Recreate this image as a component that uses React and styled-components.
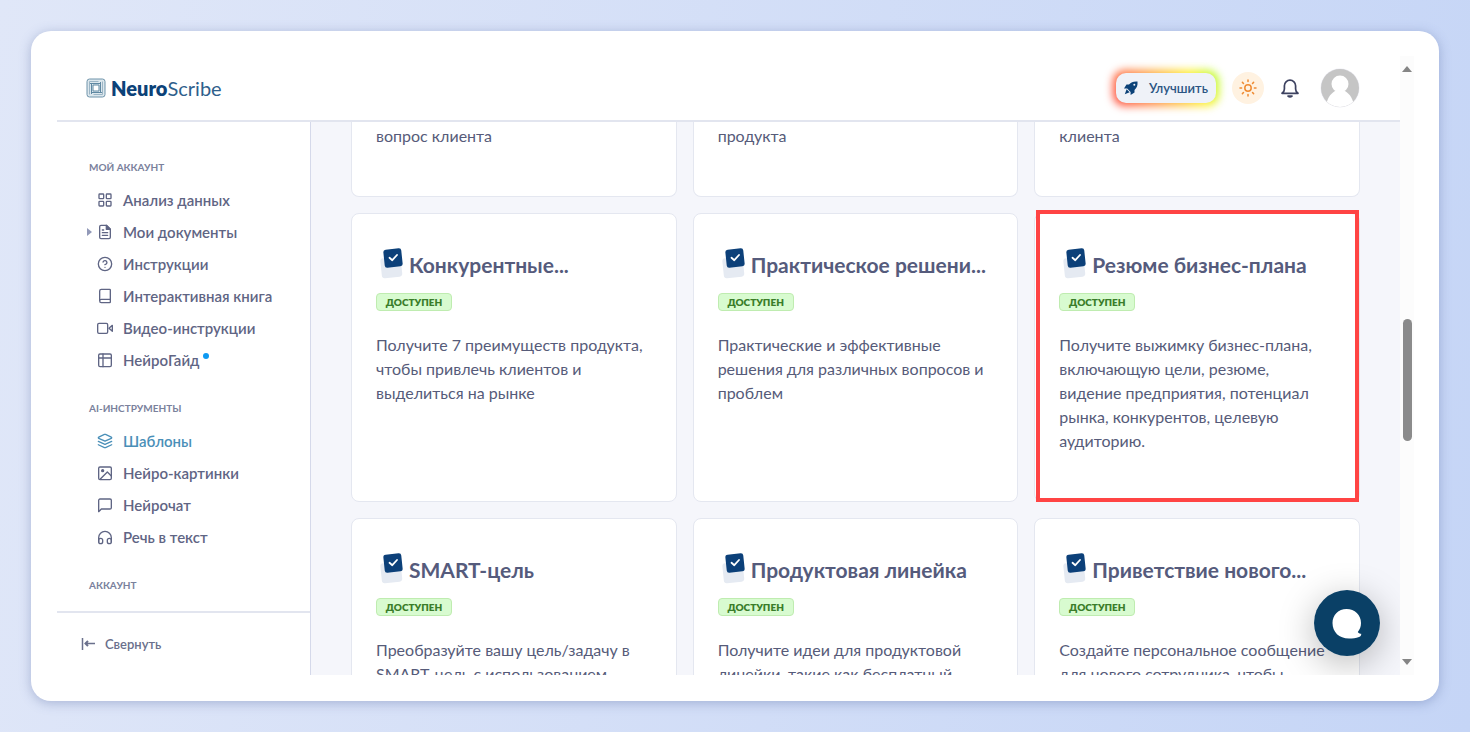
import React from "react";
import styled, { createGlobalStyle, css } from "styled-components";
import {
  LuLayoutGrid,
  LuCircleHelp,
  LuBook,
  LuLayers,
} from "react-icons/lu";

const GlobalStyle = createGlobalStyle`
  *, *::before, *::after {
    box-sizing: border-box;
  }
  body {
    margin: 0;
    font-family: Lato, "Open Sans", sans-serif;
    font-size: 16px;
    color: #52587a;
  }
  h2, h3, p, ul {
    margin: 0;
    padding: 0;
  }
  button {
    font-family: inherit;
    border: 0;
    padding: 0;
    background: none;
    cursor: pointer;
  }
`;

const Page = styled.div`
  min-height: 100vh;
  padding: 31px;
  display: flex;
  background: linear-gradient(100deg, #e0e7f8 0%, #c5d5f6 100%);
`;

const Window = styled.div`
  position: relative;
  flex: 1;
  height: calc(100vh - 62px);
  min-width: 0;
  display: flex;
  padding: 25px 25px 26px 26px;
  border-radius: 20px;
  background: #ffffff;
  box-shadow: 0 2px 12px rgba(70, 90, 150, 0.35);
`;

const Shell = styled.div`
  flex: 1;
  min-width: 0;
  display: flex;
  flex-direction: column;
`;

const Header = styled.header`
  height: 66px;
  flex-shrink: 0;
  display: flex;
  align-items: center;
  justify-content: space-between;
  padding: 0 40px 0 29px;
  border-bottom: 2px solid #e2e5ef;
`;

const Logo = styled.a`
  display: flex;
  align-items: center;
  gap: 5px;
  font-size: 20px;
  line-height: 24px;
  color: #2f5f8c;
  text-decoration: none;
`;

const LogoBold = styled.strong`
  font-weight: 800;
  color: #0c4278;
`;

const HeaderActions = styled.div`
  display: flex;
  align-items: center;
`;

const UpgradeButton = styled.button`
  position: relative;
  height: 30px;
  padding: 0 8px;
  margin-right: 16px;
  display: flex;
  align-items: center;
  gap: 11px;
  border-radius: 10px;
  font-size: 13px;
  font-weight: 600;
  color: #2b5583;
  background: #eff2f8;
  isolation: isolate;

  &::before {
    content: "";
    position: absolute;
    inset: -3px;
    z-index: -2;
    border-radius: 12px;
    background: linear-gradient(60deg, #ff4a38 5%, #ff8f42 35%, #fff02a 75%, #a8ff2c 100%);
    filter: blur(4px);
  }

  &::after {
    content: "";
    position: absolute;
    inset: 0;
    z-index: -1;
    border-radius: 10px;
    background: #eff2f8;
  }
`;

const ThemeButton = styled.button`
  width: 32px;
  height: 32px;
  margin-right: 16px;
  display: flex;
  align-items: center;
  justify-content: center;
  border-radius: 50%;
  background: #fff2e1;
`;

const BellButton = styled.button`
  width: 20px;
  height: 20px;
  margin-right: 20px;
  display: flex;
`;

const AvatarButton = styled.button`
  width: 40px;
  height: 40px;
  display: flex;
`;

const Body = styled.div`
  flex: 1;
  min-height: 0;
  display: flex;
`;

const Sidebar = styled.aside`
  width: 254px;
  flex-shrink: 0;
  display: flex;
  flex-direction: column;
  border-right: 1px solid #d5d9ea;
`;

const Nav = styled.nav`
  flex: 1;
  min-height: 0;
  overflow: hidden;
  padding: 38px 0 0 32px;
`;

const NavHeading = styled.h2`
  font-size: 10px;
  line-height: 14px;
  font-weight: 700;
  text-transform: uppercase;
  color: #7a819c;
`;

const NavList = styled.ul`
  list-style: none;
  padding: 10px 0 25px;
`;

const NavLink = styled.a`
  position: relative;
  height: 32px;
  display: flex;
  align-items: center;
  gap: 10px;
  padding-left: 8px;
  font-size: 15px;
  font-weight: 600;
  color: ${(p) => (p.$active ? "#4a8fb8" : "#5f6584")};
  text-decoration: none;
  white-space: nowrap;

  svg {
    width: 16px;
    height: 16px;
    flex-shrink: 0;
  }
`;

const Caret = styled.span`
  position: absolute;
  left: -2px;
  border-left: 5px solid #9299b8;
  border-top: 4px solid transparent;
  border-bottom: 4px solid transparent;
`;

const NewDot = styled.span`
  width: 6px;
  height: 6px;
  margin: -8px 0 0 -6px;
  border-radius: 50%;
  background: #0d99f2;
`;

const Collapse = styled.button`
  height: 64px;
  flex-shrink: 0;
  display: flex;
  align-items: center;
  gap: 8px;
  padding: 0 24px;
  border-top: 2px solid #e2e5ef;
  font-size: 13px;
  font-weight: 600;
  color: #6a708c;
`;

const Main = styled.main`
  flex: 1;
  min-width: 0;
  overflow: hidden;
  padding: 0 40px;
  background: #f5f6fb;
`;

const Grid = styled.div`
  display: grid;
  grid-template-columns: repeat(3, minmax(0, 1fr));
  gap: 16px;
`;

const Card = styled.article`
  position: relative;
  height: 289px;
  padding: 33px 24px 24px;
  border: 1px solid #e4e7f0;
  border-radius: 8px;
  background: #ffffff;

  ${(p) =>
    p.$cut &&
    css`
      height: 75px;
      padding: 2px 24px;
      border-top: 0;
      border-radius: 0 0 8px 8px;
    `}
`;

const Highlight = styled.span`
  position: absolute;
  inset: -4px 0 -1px 1px;
  border: 4px solid #ff4444;
  pointer-events: none;
`;

const CardTitle = styled.h3`
  display: flex;
  align-items: center;
  gap: 5px;
  padding-left: 4px;
  height: 32px;
  font-size: 21px;
  font-weight: 700;
  color: #555b7c;
  white-space: nowrap;
`;

const TitleText = styled.span`
  padding-top: 2px;
`;

const Badge = styled.span`
  display: block;
  width: 76px;
  margin: 14px 0 22px;
  border: 1px solid #bfecb0;
  border-radius: 4px;
  font-size: 10px;
  line-height: 16px;
  font-weight: 800;
  text-align: center;
  color: #3a7d2a;
  background: #d8fbd0;
`;

const CardText = styled.p`
  font-size: 16px;
  line-height: 24px;
  white-space: pre-line;
  color: #565b79;
`;

const Scrollbar = styled.div`
  width: 14px;
  display: flex;
  flex-direction: column;
  align-items: center;
  padding: 10px 0;
  background: #fcfcfc;
`;

const Arrow = styled.span`
  border-left: 5px solid transparent;
  border-right: 5px solid transparent;
  ${(p) => (p.$down ? "border-top" : "border-bottom")}: 6px solid #858585;
`;

const Track = styled.div`
  flex: 1;
  width: 9px;
  display: grid;
  grid-template-rows: 85fr 42fr 75fr;
`;

const Thumb = styled.div`
  grid-row: 2;
  border-radius: 5px;
  background: #8b8b8b;
`;

const ChatButton = styled.button`
  position: absolute;
  right: 59px;
  bottom: 45px;
  width: 66px;
  height: 66px;
  display: flex;
  border-radius: 50%;
  background: #0a4066;
`;

/* keeps the button's shadow inside the content area */
const ChatShadow = styled.div`
  position: absolute;
  right: 39px;
  bottom: 26px;
  width: 160px;
  height: 160px;
  overflow: hidden;
  pointer-events: none;

  &::before {
    content: "";
    position: absolute;
    right: 20px;
    bottom: 19px;
    width: 66px;
    height: 66px;
    border-radius: 50%;
    box-shadow: 0 8px 36px rgba(0, 0, 0, 0.28);
  }
`;

const Line = (props) => (
  <svg
    width="16"
    height="16"
    viewBox="0 0 24 24"
    fill="none"
    stroke="currentColor"
    strokeWidth="2"
    strokeLinecap="round"
    strokeLinejoin="round"
    aria-hidden="true"
    {...props}
  />
);

const LogoIcon = () => (
  <svg width="20" height="20" viewBox="0 0 20 20" fill="none" aria-hidden="true">
    <rect x="1" y="1" width="18" height="18" rx="2.5" fill="#dce7ed" stroke="#6f94ab" />
    <path d="M3.500 16.500v-13h9M16.500 3.500v13h-9" stroke="#9db6c6" />
    <path d="M4 5.500h10.500M14.500 4v10.500M16 14.500H5.500M5.500 16V5.500" stroke="#5f88a2" />
    <path d="M7 7h6v6H7z" fill="#ffffff" stroke="#5f88a2" />
  </svg>
);

const FileIcon = () => (
  <Line>
    <path d="M14 2H6a2 2 0 0 0-2 2v16a2 2 0 0 0 2 2h12a2 2 0 0 0 2-2V8z" />
    <path d="M14 2v6h6z" fill="currentColor" />
    <path d="M8 9h2M8 13h8M8 17h8" />
  </Line>
);

const VideoIcon = () => (
  <Line>
    <rect x="1" y="5" width="15" height="15" rx="2" />
    <path d="M23 8v9l-5-4.5z" />
  </Line>
);

const TableIcon = () => (
  <Line>
    <rect x="2.5" y="3" width="19" height="19" rx="2" />
    <path d="M2.5 9h19M9 3v19" />
  </Line>
);

const ImageIcon = () => (
  <Line>
    <rect x="2.5" y="3" width="19" height="19" rx="2" />
    <circle cx="8.5" cy="8.5" r="1.5" fill="currentColor" />
    <path d="m5 21 10.5-10.5 6 6" />
  </Line>
);

const MessageIcon = () => (
  <Line>
    <path d="M2.5 22V5a2 2 0 0 1 2-2h15a2 2 0 0 1 2 2v11a2 2 0 0 1-2 2H6.5z" />
  </Line>
);

const HeadphonesIcon = () => (
  <Line>
    <path d="M2.5 19v-6a9.5 9.5 0 0 1 19 0v6" />
    <path d="M2.5 19a3 3 0 0 0 6 0v-2a3 3 0 0 0-6 0zM21.5 19a3 3 0 0 1-6 0v-2a3 3 0 0 1 6 0z" />
  </Line>
);

const CollapseIcon = () => (
  <svg width="16" height="14" viewBox="0 0 16 14" fill="none" stroke="currentColor" strokeWidth="1.5" aria-hidden="true">
    <path d="M1.5 1v12M4.5 6.5H14" />
    <path d="M7 4 4.5 6.5 7 9" strokeWidth="2" />
  </svg>
);

const RocketIcon = () => (
  <svg width="14" height="14" viewBox="0 0 14 14" fill="#0c4278" aria-hidden="true">
    <path d="M13.5.5C9.5.2 7 1.2 5 3.5H2.5L0 7.5h3.2L6.6 11v2.9l3.900-2.400V9C12.800 6.800 13.900 4.400 13.500.5z" />
    <path d="M2.6 8.3.8 13.200l4.800-2z" />
    <circle cx="10.3" cy="3.8" r="1" fill="#eff2f8" />
  </svg>
);

const SunIcon = () => (
  <svg width="18" height="18" viewBox="0 0 18 18" fill="none" stroke="#ef8b32" strokeWidth="1.5" strokeLinecap="round" aria-hidden="true">
    <circle cx="9" cy="9" r="3.2" />
    <path d="M9 1v1.6M9 15.4V17M1 9h1.6M15.4 9H17M3.4 3.4l1.1 1.1M13.5 13.5l1.1 1.1M3.4 14.6l1.1-1.1M13.5 4.5l1.1-1.1" />
  </svg>
);

const BellIcon = () => (
  <svg width="20" height="20" viewBox="0 0 20 20" fill="none" stroke="#3d4260" strokeWidth="1.7" strokeLinejoin="round" aria-hidden="true">
    <path d="M2 15.3h16c-2-1.3-2.4-2.5-2.4-4.3V7.8a5.6 5.6 0 0 0-11.2 0V11c0 1.8-.4 3-2.4 4.3z" />
    <path d="M8 18q2 1.8 4 0z" fill="#3d4260" />
  </svg>
);

const AvatarIcon = () => (
  <svg width="40" height="40" viewBox="0 0 40 40" aria-hidden="true">
    <clipPath id="avatar">
      <circle cx="20" cy="20" r="19" />
    </clipPath>
    <circle cx="20" cy="20" r="19.5" fill="#ececf4" />
    <g clipPath="url(#avatar)">
      <path d="M0 0h40v40H0z" fill="#c5c5c5" />
      <circle cx="20" cy="16" r="8.5" fill="#fff" />
      <path d="M6 40c0-8 4-14 9-17h10c5 3 9 9 9 17z" fill="#fff" />
    </g>
  </svg>
);

const TemplateIcon = () => (
  <svg width="24" height="32" viewBox="0 0 24 32" aria-hidden="true">
    <rect x="1" y="10.5" width="20.5" height="20" rx="3" transform="rotate(-6 11 20)" fill="#e5eaf2" />
    <rect x="4" y="2" width="18" height="18" rx="2.5" transform="rotate(-6 13 11)" fill="#0c4079" />
    <path d="m9.5 10.8 2.8 2.4 4.7-5.2" fill="none" stroke="#fff" strokeWidth="1.8" strokeLinecap="round" strokeLinejoin="round" />
  </svg>
);

const ChatIcon = () => (
  <svg width="66" height="66" viewBox="0 0 66 66" aria-hidden="true">
    <path fill="#fff" d="M32.5 19c8.3 0 14.5 6 14.5 14 0 3.7-1.2 6.7-3.2 8.9.7 1.1 1.8 1.7 3.4 1.9.2 1.6-.5 2.8-2.2 3.2-3 1.1-6.5 1.500-10 1.500C25 48.500 18.500 42 18.500 33c0-8 6-14 14-14z" />
  </svg>
);

const navSections = [
  {
    title: "Мой аккаунт",
    items: [
      { label: "Анализ данных", icon: <LuLayoutGrid /> },
      { label: "Мои документы", icon: <FileIcon />, expandable: true },
      { label: "Инструкции", icon: <LuCircleHelp /> },
      { label: "Интерактивная книга", icon: <LuBook /> },
      { label: "Видео-инструкции", icon: <VideoIcon /> },
      { label: "НейроГайд", icon: <TableIcon />, isNew: true },
    ],
  },
  {
    title: "AI-инструменты",
    items: [
      { label: "Шаблоны", icon: <LuLayers />, active: true },
      { label: "Нейро-картинки", icon: <ImageIcon /> },
      { label: "Нейрочат", icon: <MessageIcon /> },
      { label: "Речь в текст", icon: <HeadphonesIcon /> },
    ],
  },
  { title: "Аккаунт", items: [] },
];

const cutCards = ["вопрос клиента", "продукта", "клиента"];

const cards = [
  {
    title: "Конкурентные...",
    text: "Получите 7 преимуществ продукта,\nчтобы привлечь клиентов и\nвыделиться на рынке",
  },
  {
    title: "Практическое решени...",
    text: "Практические и эффективные\nрешения для различных вопросов и\nпроблем",
  },
  {
    title: "Резюме бизнес-плана",
    text: "Получите выжимку бизнес-плана,\nвключающую цели, резюме,\nвидение предприятия, потенциал\nрынка, конкурентов, целевую\nаудиторию.",
    highlighted: true,
  },
  {
    title: "SMART-цель",
    text: "Преобразуйте вашу цель/задачу в\nSMART-цель с использованием",
  },
  {
    title: "Продуктовая линейка",
    text: "Получите идеи для продуктовой\nлинейки, такие как бесплатный",
  },
  {
    title: "Приветствие нового...",
    text: "Создайте персональное сообщение\nдля нового сотрудника, чтобы",
  },
];

export default function App() {
  return (
    <Page>
      <GlobalStyle />
      <Window>
        <Shell>
          <Header>
            <Logo href="#">
              <LogoIcon />
              <span>
                <LogoBold>Neuro</LogoBold>Scribe
              </span>
            </Logo>
            <HeaderActions>
              <UpgradeButton>
                <RocketIcon />
                Улучшить
              </UpgradeButton>
              <ThemeButton>
                <SunIcon />
              </ThemeButton>
              <BellButton>
                <BellIcon />
              </BellButton>
              <AvatarButton>
                <AvatarIcon />
              </AvatarButton>
            </HeaderActions>
          </Header>
          <Body>
            <Sidebar>
              <Nav>
                {navSections.map((section) => (
                  <React.Fragment key={section.title}>
                    <NavHeading>{section.title}</NavHeading>
                    <NavList>
                      {section.items.map((item) => (
                        <li key={item.label}>
                          <NavLink href="#" $active={item.active}>
                            {item.expandable && <Caret />}
                            {item.icon}
                            {item.label}
                            {item.isNew && <NewDot />}
                          </NavLink>
                        </li>
                      ))}
                    </NavList>
                  </React.Fragment>
                ))}
              </Nav>
              <Collapse>
                <CollapseIcon />
                Свернуть
              </Collapse>
            </Sidebar>
            <Main>
              <Grid>
                {cutCards.map((text) => (
                  <Card key={text} $cut>
                    <CardText>{text}</CardText>
                  </Card>
                ))}
                {cards.map((card) => (
                  <Card key={card.title}>
                    <CardTitle>
                      <TemplateIcon />
                      <TitleText>{card.title}</TitleText>
                    </CardTitle>
                    <Badge>ДОСТУПЕН</Badge>
                    <CardText>{card.text}</CardText>
                    {card.highlighted && <Highlight />}
                  </Card>
                ))}
              </Grid>
            </Main>
          </Body>
        </Shell>
        <Scrollbar>
          <Arrow />
          <Track>
            <Thumb />
          </Track>
          <Arrow $down />
        </Scrollbar>
        <ChatShadow />
        <ChatButton>
          <ChatIcon />
        </ChatButton>
      </Window>
    </Page>
  );
}
